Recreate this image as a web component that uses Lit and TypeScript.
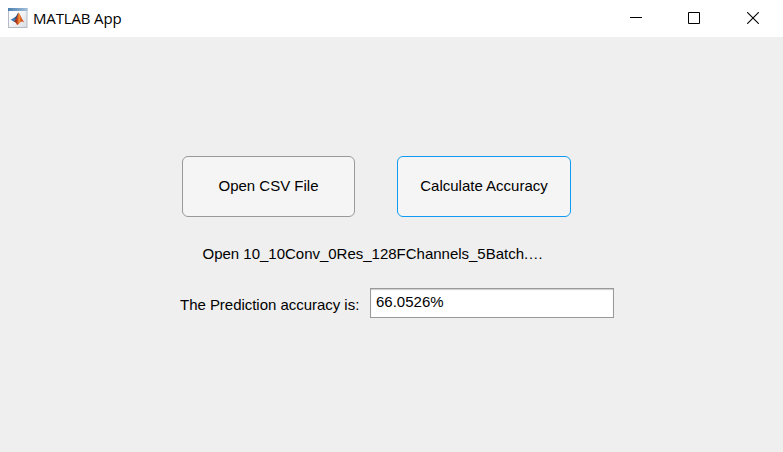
import { LitElement, html, css } from "lit";
import { customElement, property } from "lit/decorators.js";

@customElement("title-bar")
class TitleBar extends LitElement {
  @property() heading = "";

  static styles = css`
    :host {
      display: flex;
      height: 37px;
      background: #fff;
      color: #000;
    }
    .icon {
      width: 20px;
      height: 20px;
      margin: 8px 0 0 8px;
      flex: none;
    }
    .heading {
      flex: 1;
      margin-left: 5px;
      font: 15px/37px "Open Sans", "Noto Sans", sans-serif;
      letter-spacing: -0.15px;
      white-space: nowrap;
    }
    .controls {
      display: grid;
      grid-template-columns: 58px 58px 60px;
    }
    .control {
      display: flex;
      justify-content: center;
      padding: 12px 0 0;
      border: 0;
      background: none;
    }
    .control svg {
      display: block;
      width: 12px;
      height: 12px;
      fill: none;
      stroke: #000;
    }
  `;

  render() {
    return html`
      <svg class="icon" viewBox="0 0 20 20">
        <defs>
          <linearGradient id="bar" x1="0" x2="1">
            <stop offset="0" stop-color="#4c7fb2" />
            <stop offset="1" stop-color="#a4c0da" />
          </linearGradient>
          <linearGradient id="pane" x1="0" y1="0" x2="1" y2="1">
            <stop offset=".3" stop-color="#fbfcfd" />
            <stop offset="1" stop-color="#d9dde2" />
          </linearGradient>
          <linearGradient id="flame" x1="0" x2="1">
            <stop offset="0" stop-color="#5a1c1c" />
            <stop offset=".35" stop-color="#c8401c" />
            <stop offset=".52" stop-color="#f39a3a" />
            <stop offset=".7" stop-color="#d9541c" />
            <stop offset="1" stop-color="#b8340f" />
          </linearGradient>
        </defs>
        <rect x=".5" y=".5" width="18.5" height="19" fill="url(#pane)" stroke="#b3bcc6" />
        <rect x="0" y="0" width="19.5" height="3" fill="url(#bar)" />
        <path d="M2.6 11.7 6.4 9.6 8.2 11.7 5.6 13.5z" fill="#3e7cb5" />
        <path d="M6.4 9.6C8.4 9.1 8.8 6 10.6 4.5L10 9.3 8 12z" fill="#2b4f7d" />
        <path d="M10.6 4.5C12.4 6 13.6 11.2 16.3 14.4 14.2 12.8 13.1 13.4 12.1 14.5 11 15.8 10.1 17 9 17.1 8.5 15 7.4 13.9 5.6 13.5 8.6 12.1 9.4 6.7 10.6 4.5z" fill="url(#flame)" />
      </svg>
      <div class="heading">${this.heading}</div>
      <div class="controls">
        <button class="control" aria-label="Minimize">
          <svg viewBox="0 0 12 12"><path d="M0 5.5H12" /></svg>
        </button>
        <button class="control" aria-label="Maximize">
          <svg viewBox="0 0 12 12"><path d="M.5.5h11v11H.5z" /></svg>
        </button>
        <button class="control" aria-label="Close">
          <svg viewBox="0 0 12 12"><path d="M.2.2 11.8 11.8M11.8.2.2 11.8" stroke-width="1.1" /></svg>
        </button>
      </div>
    `;
  }
}

@customElement("app-root")
class AppRoot extends LitElement {
  static styles = css`
    :host {
      display: flex;
      flex-direction: column;
      height: 100vh;
      overflow: hidden;
      background: #efefef;
      color: #000;
      font: 15px/18px "Liberation Sans", Arial, sans-serif;
    }
    .content {
      padding-top: 119px;
    }
    .actions {
      display: grid;
      grid-template-columns: 173px 174px;
      column-gap: 42px;
      margin-left: 182px;
    }
    .action {
      box-sizing: border-box;
      height: 61px;
      padding: 0 0 1px;
      border: 1px solid #999;
      border-radius: 6px;
      background: #f5f5f5;
      color: #000;
      font: inherit;
    }
    .action.active {
      border-color: #0f9bf2;
    }
    .file {
      margin: 28px 0 0 202.5px;
      letter-spacing: -0.01px;
      white-space: nowrap;
    }
    .result {
      display: flex;
      margin: 25px 0 0 180px;
    }
    .label {
      width: 190px;
      padding-top: 8px;
      letter-spacing: -0.03px;
      white-space: nowrap;
    }
    .value {
      box-sizing: border-box;
      width: 244px;
      height: 30px;
      padding: 0 5px 3px;
      border: 1px solid #999;
      border-radius: 0;
      background: #fff;
      box-shadow: inset 0 1px 1px #ccc;
      color: #000;
      font: inherit;
      outline: none;
    }
  `;

  render() {
    return html`
      <title-bar heading="MATLAB App"></title-bar>
      <main class="content">
        <div class="actions">
          <button class="action">Open CSV File</button>
          <button class="action active">Calculate Accuracy</button>
        </div>
        <div class="file">Open 10_10Conv_0Res_128FChannels_5Batch.…</div>
        <div class="result">
          <label class="label" for="accuracy">The Prediction accuracy is:</label>
          <input class="value" id="accuracy" value="66.0526%" />
        </div>
      </main>
    `;
  }
}
